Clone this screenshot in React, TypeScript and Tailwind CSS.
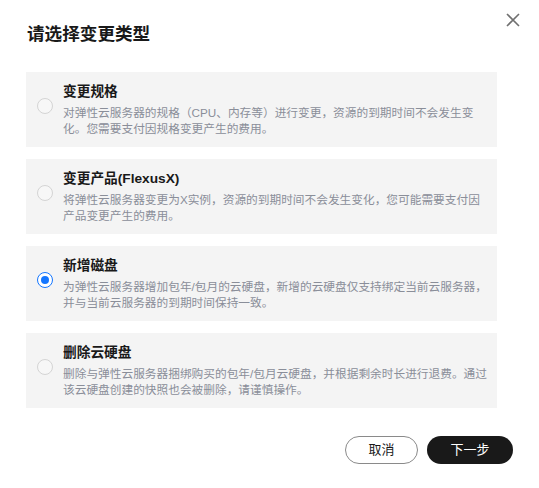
const options = [
  {
    title: "变更规格",
    desc: ["对弹性云服务器的规格（CPU、内存等）进行变更，资源的到期时间不会发生变", "化。您需要支付因规格变更产生的费用。"],
  },
  {
    title: "变更产品(FlexusX)",
    desc: ["将弹性云服务器变更为X实例，资源的到期时间不会发生变化，您可能需要支付因", "产品变更产生的费用。"],
  },
  {
    title: "新增磁盘",
    desc: ["为弹性云服务器增加包年/包月的云硬盘，新增的云硬盘仅支持绑定当前云服务器，", "并与当前云服务器的到期时间保持一致。"],
  },
  {
    title: "删除云硬盘",
    desc: ["删除与弹性云服务器捆绑购买的包年/包月云硬盘，并根据剩余时长进行退费。通过", "该云硬盘创建的快照也会被删除，请谨慎操作。"],
  },
];

function Radio({ checked }: { checked: boolean }) {
  if (checked) {
    return (
      <span className="mt-[16px] flex h-[16px] w-[16px] shrink-0 items-center justify-center rounded-full border-[1.5px] border-[#1476ff] bg-white">
        <span className="h-[8px] w-[8px] rounded-full bg-[#1476ff]" />
      </span>
    );
  }
  return <span className="mt-[16px] h-[16px] w-[16px] shrink-0 rounded-full border border-[#d4d4d4] bg-[#f7f7f7]" />;
}

export default function App() {
  const selected = 2;

  return (
    <div
      className="relative h-[488px] w-[539px] bg-white px-[26px] pt-[22px]"
      style={{ fontFamily: '"Liberation Sans", "Noto Sans CJK SC", sans-serif' }}
    >
      <button className="absolute right-[19px] top-[13px] text-[#707070]">
        <svg width="14" height="14" viewBox="0 0 14 14" fill="none" stroke="currentColor" strokeWidth="1.6">
          <path d="M1 1L13 13M13 1L1 13" />
        </svg>
      </button>

      <h1 className="pl-px text-[17.6px] leading-[24px] font-bold text-[#191919]">请选择变更类型</h1>

      <div className="mt-[26px] flex w-[471px] flex-col gap-[12px]">
        {options.map((o, i) => (
          <div key={o.title} className="flex h-[75px] gap-[10px] bg-[#f4f4f4] pl-[11px] pr-[10px] pt-[10px]">
            <Radio checked={i === selected} />
            <div className="min-w-0 flex-1">
              <div className="text-[13.7px] leading-[20px] font-bold text-[#191919]">{o.title}</div>
              <div className="mt-[3px] text-[11.7px] leading-[16px] text-[#8a8e99]">
                {o.desc.map((line) => (
                  <div key={line} className="whitespace-nowrap">
                    {line}
                  </div>
                ))}
              </div>
            </div>
          </div>
        ))}
      </div>

      <div className="mt-[28px] flex justify-end gap-[9px]">
        <button className="h-[28px] w-[73px] rounded-full border border-[#8a8a8a] bg-white text-[13px] text-[#191919]">
          取消
        </button>
        <button className="h-[28px] w-[86px] rounded-full bg-[#191919] text-[13px] text-white">下一步</button>
      </div>
    </div>
  );
}
